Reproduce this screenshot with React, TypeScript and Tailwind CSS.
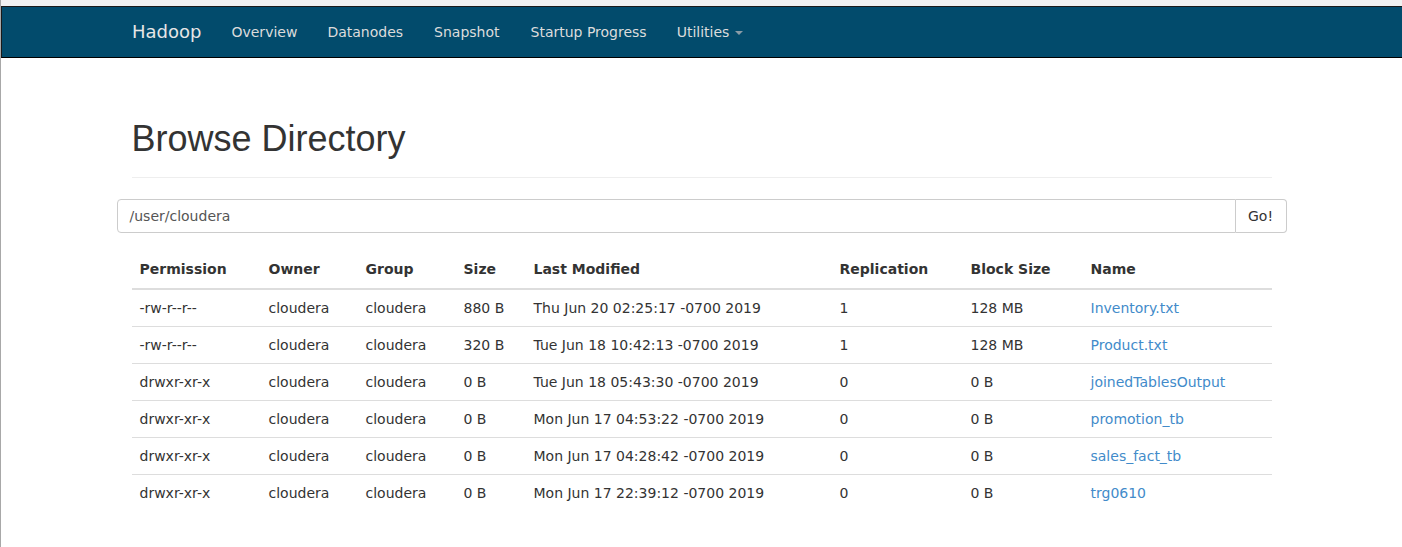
import React from 'react';

type Entry = {
    permission: string;
    owner: string;
    group: string;
    size: string;
    modified: string;
    replication: string;
    blockSize: string;
    name: string;
};

const entries: Entry[] = [
    { permission: '-rw-r--r--', owner: 'cloudera', group: 'cloudera', size: '880 B', modified: 'Thu Jun 20 02:25:17 -0700 2019', replication: '1', blockSize: '128 MB', name: 'Inventory.txt' },
    { permission: '-rw-r--r--', owner: 'cloudera', group: 'cloudera', size: '320 B', modified: 'Tue Jun 18 10:42:13 -0700 2019', replication: '1', blockSize: '128 MB', name: 'Product.txt' },
    { permission: 'drwxr-xr-x', owner: 'cloudera', group: 'cloudera', size: '0 B', modified: 'Tue Jun 18 05:43:30 -0700 2019', replication: '0', blockSize: '0 B', name: 'joinedTablesOutput' },
    { permission: 'drwxr-xr-x', owner: 'cloudera', group: 'cloudera', size: '0 B', modified: 'Mon Jun 17 04:53:22 -0700 2019', replication: '0', blockSize: '0 B', name: 'promotion_tb' },
    { permission: 'drwxr-xr-x', owner: 'cloudera', group: 'cloudera', size: '0 B', modified: 'Mon Jun 17 04:28:42 -0700 2019', replication: '0', blockSize: '0 B', name: 'sales_fact_tb' },
    { permission: 'drwxr-xr-x', owner: 'cloudera', group: 'cloudera', size: '0 B', modified: 'Mon Jun 17 22:39:12 -0700 2019', replication: '0', blockSize: '0 B', name: 'trg0610' },
];

const columns = [
    { label: 'Permission', width: 'w-[129px]' },
    { label: 'Owner', width: 'w-[97px]' },
    { label: 'Group', width: 'w-[98px]' },
    { label: 'Size', width: 'w-[70px]' },
    { label: 'Last Modified', width: 'w-[306px]' },
    { label: 'Replication', width: 'w-[131px]' },
    { label: 'Block Size', width: 'w-[120px]' },
    { label: 'Name', width: 'w-[189px]' },
];

// small per-item padding tweaks to line up with the original rendering
const navItems = [
    { label: 'Overview', pad: 'pl-[15px] pr-[15px]' },
    { label: 'Datanodes', pad: 'pl-[15px] pr-[16px]' },
    { label: 'Snapshot', pad: 'pl-[15px] pr-[16px]' },
    { label: 'Startup Progress', pad: 'pl-[15px] pr-[15px]' },
];

const Navbar: React.FC = () => (
    <div className="h-[52px] bg-[#024b6c] border-t border-b border-l border-[#1a1a1a] border-b-black">
        <div className="w-[1170px] mx-auto flex items-center h-[50px] pl-[15px]">
            <span className="text-[18px] leading-[20px] text-[#e6e6e6] pr-[15px]">Hadoop</span>
            {navItems.map(item => (
                <span key={item.label} className={`${item.pad} text-[14px] leading-[20px] text-[#dcdcdc]`}>{item.label}</span>
            ))}
            <span className="px-[15px] text-[14px] leading-[20px] text-[#dcdcdc] flex items-center">
                Utilities
                <span className="ml-[6px] mt-[2px] w-0 h-0 border-l-[4px] border-r-[4px] border-t-[4px] border-l-transparent border-r-transparent border-t-[#8a9ba6]" />
            </span>
        </div>
    </div>
);

export default function App() {
    return (
        <div className="min-h-[547px] bg-white border-l border-[#a8a8a8] text-[#333] font-['DejaVu_Sans',sans-serif]">
            <div className="h-[6px] bg-[#f1f1f1]" />
            <Navbar />

            <main className="w-[1170px] mx-auto pt-[61px]">
                <div className="mx-[15px] border-b border-[#eee] pb-[18px]">
                    <h1 className="font-['Liberation_Sans',Arial,sans-serif] text-[36px] leading-[40px] text-[#333]">Browse Directory</h1>
                </div>

                <div className="mt-[21px] flex h-[34px]">
                    <div className="flex-1 border border-[#ccc] rounded-l-[4px] px-[12px] flex items-center text-[14px] text-[#555]">/user/cloudera</div>
                    <button className="w-[51px] border border-l-0 border-[#ccc] rounded-r-[4px] bg-white text-[14px] text-[#333]">Go!</button>
                </div>

                <table className="mx-[15px] mt-[18px] w-[1140px] border-collapse text-[14px] leading-[20px] table-fixed">
                    <thead>
                        <tr>
                            {columns.map(col => (
                                <th key={col.label} className={`${col.width} text-left font-bold px-[8px] pt-[8px] pb-[9px] border-b-2 border-[#ddd]`}>{col.label}</th>
                            ))}
                        </tr>
                    </thead>
                    <tbody>
                        {entries.map(e => (
                            <tr key={e.name} className="border-t border-[#ddd]">
                                <td className="p-[8px]">{e.permission}</td>
                                <td className="p-[8px]">{e.owner}</td>
                                <td className="p-[8px]">{e.group}</td>
                                <td className="p-[8px]">{e.size}</td>
                                <td className="p-[8px]">{e.modified}</td>
                                <td className="p-[8px]">{e.replication}</td>
                                <td className="p-[8px]">{e.blockSize}</td>
                                <td className="p-[8px] text-[#428bca]">{e.name}</td>
                            </tr>
                        ))}
                    </tbody>
                </table>
            </main>
        </div>
    );
}
